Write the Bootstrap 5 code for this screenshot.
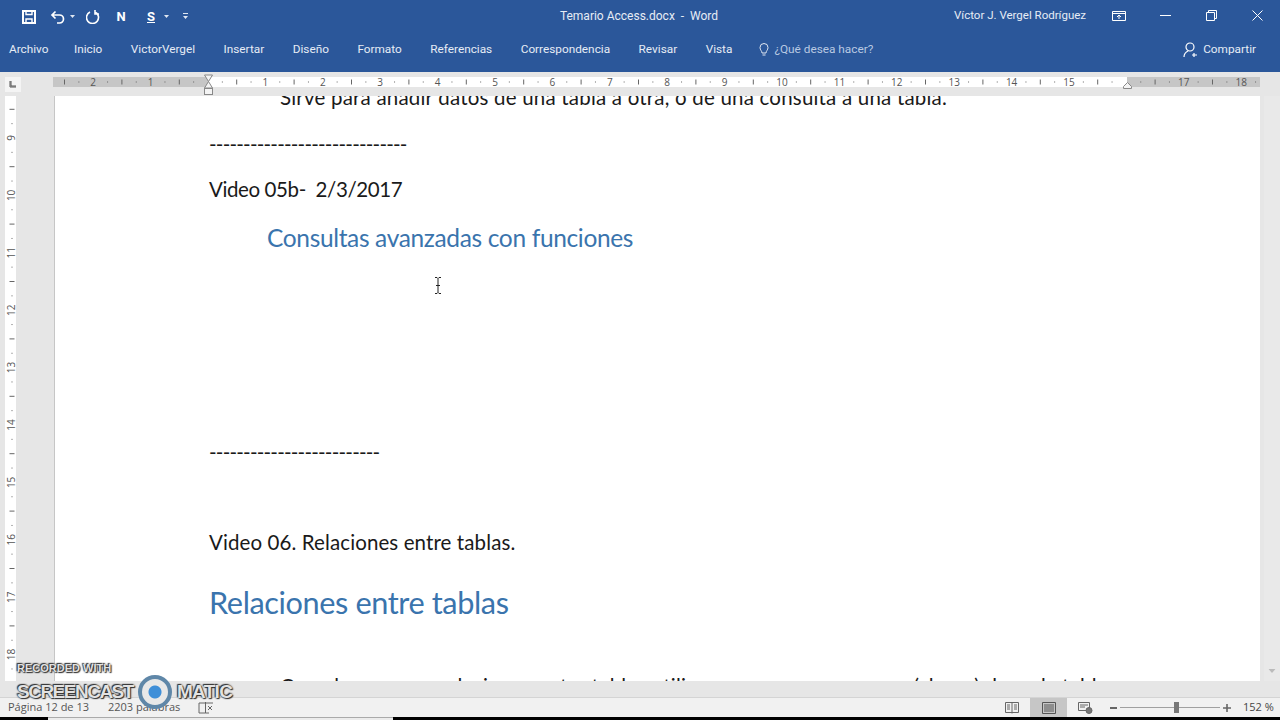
<!DOCTYPE html>
<html lang="es">
<head>
<meta charset="UTF-8">
<title>Temario Access.docx - Word</title>
<link href="https://cdn.jsdelivr.net/npm/bootstrap@5.3.0/dist/css/bootstrap.min.css" rel="stylesheet">
<style>
html, body { height: 720px; overflow: hidden; }
body { font-family: Roboto, "Liberation Sans", sans-serif; background: #000; }
.app { height: 717px; position: relative; }
.word-blue { background: #2b579a; color: #fff; }
.titlebar { height: 33px; font-size: 12px; padding-left: 21px; padding-bottom: 2px; }
.titlebar svg { display: block; }
.qat { width: 430px; gap: 11px; margin-top: 2px; }
.qat b { font-size: 13px; width: 14px; text-align: center; }
.qat-save { margin-right: 2px; }
.qat-n { margin-left: 3px; }
.qat-s { margin-left: 5px; gap: 6px; }
.qat-more { margin-left: 8px; }
.doc-title { width: 376px; text-align: center; white-space: pre; color: #e6ecf5; }
.user { margin-left: auto; width: 132px; margin-right: 10px; color: #e6ecf5; font-size: 11.5px; }
.winbtn { width: 46px; display: flex; justify-content: center; }
.tabs { height: 39px; font-size: 11.8px; padding-left: 9px; padding-bottom: 5px; color: #e6ecf5; }
.tabs span.tab { margin-right: 28.500px; }
.tabs span.tab-first { margin-right: 25.500px; }
.tabs span.tab-last { margin-right: 26px; }
.tell { color: #b9c9e2; }
.share { margin-left: auto; margin-right: 24px; }
.hruler { height: 24px; background: #e6e6e6; }
.hruler svg, .vruler svg { display: block; }
.ruler-text { font-family: "Open Sans", sans-serif; font-size: 10px; fill: #555; }
.main { height: 585px; background: #e6e6e6; }
.vruler { width: 54px; flex: none; }
.page { width: 1206px; flex: none; background: #fff; border-left: 1px solid #c6c6c6; overflow: hidden; padding-left: 154px; font-family: Lato, "Open Sans", sans-serif; color: #1a1a1a; }
.page p { margin: 0; line-height: 30px; height: 30px; white-space: pre; font-size: 20.500px; }
.vscroll { flex: 1; background: #e9e9e9; position: relative; margin-left: 4px; }
.hscroll { height: 16px; background: #e6e6e6; }
.statusbar { height: 20px; background: #f1f1f1; border-top: 1px solid #d4d4d4; font-family: "Open Sans", sans-serif; font-size: 11px; color: #555; padding-left: 8px; }
.statusbar .words { margin-left: 19px; }
.statusbar svg { display: block; }
.book { margin-left: 18px; }
.l1 { margin-top: -14px !important; padding-left: 71px; letter-spacing: .2px; }
.l2 { margin-top: 17px !important; letter-spacing: -.8px; }
.l3 { margin-top: 15px !important; letter-spacing: -.4px; }
.l4 { margin-top: 19px !important; padding-left: 58px; color: #3a74ad; font-size: 24.500px !important; letter-spacing: -.35px; }
.l5 { margin-top: 184px !important; letter-spacing: -.8px; }
.l6 { margin-top: 60px !important; letter-spacing: .1px; }
.l7 { margin-top: 31px !important; color: #3a74ad; font-size: 30.700px !important; letter-spacing: -.4px; }
.l8 { margin-top: 53px !important; padding-left: 71px; letter-spacing: .25px; }
.view { width: 37px; height: 19px; display: flex; align-items: center; justify-content: center; }
.view.active { background: #c6c6c6; }
.zoom-minus { margin-left: 6px; }
.zoom-track { width: 100px; height: 1px; background: #a0a0a0; position: relative; margin: 0 3px; }
.zoom-thumb { position: absolute; left: 54px; top: -5px; width: 5px; height: 11px; background: #777; }
.zoom-pct { width: 37px; margin-left: 12px; color: #444; font-size: 11px; }
.cursor { position: absolute; left: 433px; top: 277px; }
.wm { position: absolute; left: 17px; top: 660px; color: #e2e2e2; font-family: "Liberation Sans", sans-serif; font-weight: 700; text-shadow: 0 0 2px #222, 1px 1px 1px #333, -1px -1px 1px #333; }
.wm-top { font-size: 11px; line-height: 16px; }
.wm-bot { font-size: 19px; line-height: 28px; gap: 5px; margin-top: -1px; }
.wm-screencast { letter-spacing: -1.500px; }
.wm-matic { letter-spacing: -0.700px; }
.wm-dot { width: 34px; height: 34px; border-radius: 50%; border: 4px solid #5f87a8; background: radial-gradient(circle, #3f8fd8 0 6px, #e8e8e8 7px); }
.edge { height: 3px; }
.edge-light { width: 345px; margin-left: 48px; background: #ececec; border-top: 1px solid #aaa; }
</style>
</head>
<body>
<div class="app d-flex flex-column">
  <div class="titlebar word-blue d-flex align-items-center">
    <div class="qat d-flex align-items-center">
      <svg class="qat-save" width="16" height="16" viewBox="0 0 16 16" fill="none" stroke="#fff" stroke-width="2"><path d="M2 2h12v12H2z"/><path d="M5 2v3.500h6V2" stroke-width="1.400"/><path d="M5 14V10h6v4" stroke-width="1.400"/></svg>
      <div class="d-flex align-items-center gap-1">
        <svg width="16" height="14" viewBox="0 0 16 14" fill="none" stroke="#fff" stroke-width="1.7"><path d="M5.500 1.500 2 5l3.500 3.500M2.500 5h7a4 4 0 0 1 0 8H7"/></svg>
        <svg width="5" height="3" viewBox="0 0 5 3"><path d="M0 0h5L2.500 3z" fill="#dfe6f1"/></svg>
      </div>
      <svg width="14" height="15" viewBox="0 0 14 15" fill="none" stroke="#fff" stroke-width="1.6"><path d="M4 3a6 6 0 1 0 5 0M9 1v4h4"/></svg>
      <b class="qat-n">N</b>
      <div class="qat-s d-flex align-items-center">
        <b class="text-decoration-underline">S</b>
        <svg width="5" height="3" viewBox="0 0 5 3"><path d="M0 0h5L2.500 3z" fill="#dfe6f1"/></svg>
        <svg class="qat-more" width="5" height="7" viewBox="0 0 5 7"><path d="M0 0h5v1H0zM0 3h5L2.500 6z" fill="#dfe6f1"/></svg>
      </div>
    </div>
    <div class="doc-title">Temario Access.docx  -  Word</div>
    <div class="user text-nowrap">Víctor J. Vergel Rodríguez</div>
    <div class="winbtn"><svg width="14" height="10" viewBox="0 0 14 10" fill="none" stroke="#fff"><path d="M.5.500h13v9H.5zM.5 2.500h13M7 8V4M5 6l2-2 2 2"/></svg></div>
    <div class="winbtn"><svg width="11" height="2" viewBox="0 0 11 2"><path d="M0 .5h11" stroke="#fff"/></svg></div>
    <div class="winbtn"><svg width="11" height="11" viewBox="0 0 11 11" fill="none" stroke="#fff"><path d="M.5 2.500h8v8h-8zM2.500 2.500v-2h8v8h-2"/></svg></div>
    <div class="winbtn"><svg width="11" height="11" viewBox="0 0 11 11" fill="none" stroke="#fff"><path d="M.5.5l10 10M10.500.5l-10 10"/></svg></div>
  </div>
  <div class="tabs word-blue d-flex align-items-center text-nowrap">
    <span class="tab tab-first">Archivo</span><span class="tab">Inicio</span><span class="tab">VictorVergel</span><span class="tab">Insertar</span><span class="tab">Diseño</span><span class="tab">Formato</span><span class="tab">Referencias</span><span class="tab">Correspondencia</span><span class="tab">Revisar</span><span class="tab tab-last">Vista</span>
    <svg class="me-1" width="12" height="14" viewBox="0 0 12 14" fill="none" stroke="#dfe6f1"><path d="M4 10c0-2-2-3-2-5.500a4 4 0 0 1 8 0C10 7 8 8 8 10zM4.500 12h3"/></svg>
    <span class="tell">¿Qué desea hacer?</span>
    <div class="share d-flex align-items-center gap-1">
      <svg width="16" height="16" viewBox="0 0 16 16" fill="none" stroke="#fff" stroke-width="1.2"><circle cx="7" cy="5" r="4"/><path d="M1 15c0-3 2-5 4-6M11 11v4M9 13h5"/></svg>
      <span>Compartir</span>
    </div>
  </div>
  <div class="hruler" id="hruler"></div>
  <div class="main d-flex">
    <div class="vruler" id="vruler"></div>
    <div class="page">
      <p class="l1">Sirve para añadir datos de una tabla a otra, o de una consulta a una tabla.</p>
      <p class="l2">-----------------------------</p>
      <p class="l3">Video 05b-  2/3/2017</p>
      <p class="l4">Consultas avanzadas con funciones</p>
      <p class="l5">-------------------------</p>
      <p class="l6">Video 06. Relaciones entre tablas.</p>
      <p class="l7">Relaciones entre tablas</p>
      <p class="l8">Cuando creamos relaciones entre tablas utilizamos campos comunes (claves) de cada tabla</p>
    </div>
    <div class="vscroll">
      <svg class="position-absolute bottom-0 start-50 translate-middle-x mb-2" width="7" height="4" viewBox="0 0 7 4"><path d="M0 0h7L3.500 4z" fill="#bbb"/></svg>
    </div>
  </div>
  <div class="hscroll"></div>
  <div class="statusbar d-flex align-items-center text-nowrap">
    <span>Página 12 de 13</span>
    <span class="words">2203 palabras</span>
    <svg class="book" width="16" height="14" viewBox="0 0 16 14" fill="none" stroke="#666"><path d="M7.500 2H1v10h6.500V1M7.500 2H15M7.500 12H11M10 5l4 4M14 5l-4 4"/></svg>
    <div class="ms-auto d-flex align-items-center">
      <div class="view"><svg width="14" height="12" viewBox="0 0 14 12" fill="none" stroke="#666"><path d="M.5.5h13v10H.5zM7 .5v11M2 3h3M2 5h3M2 7h3M9 3h3M9 5h3M9 7h3"/></svg></div>
      <div class="view active"><svg width="14" height="12" viewBox="0 0 14 12" fill="none" stroke="#555"><path d="M.5.5h13v11H.5zM2 3h10M2 5h10M2 7h10M2 9h10"/></svg></div>
      <div class="view"><svg width="15" height="12" viewBox="0 0 15 12" fill="none" stroke="#666"><path d="M.5.5h11v8H.5zM2 3h8M2 5h5"/><circle cx="11" cy="8.500" r="3" fill="#777"/></svg></div>
      <svg class="zoom-minus" width="7" height="2" viewBox="0 0 7 2"><path d="M0 1h7" stroke="#666" stroke-width="2"/></svg>
      <div class="zoom-track"><div class="zoom-thumb"></div></div>
      <svg width="8" height="8" viewBox="0 0 8 8"><path d="M0 4h8M4 0v8" stroke="#666" stroke-width="1.600"/></svg>
      <span class="zoom-pct">152 %</span>
    </div>
  </div>
  <svg class="cursor" width="10" height="17" viewBox="0 0 10 17" fill="none" stroke="#222"><path d="M2 .5h2l1 1 1-1h2M5 1.500v14M2 16.500h2l1-1 1 1h2M3 8.500h4"/></svg>
  <div class="wm">
    <div class="wm-top">RECORDED WITH</div>
    <div class="wm-bot d-flex align-items-center"><span class="wm-screencast">SCREENCAST</span><span class="wm-dot"></span><span class="wm-matic">MATIC</span></div>
  </div>
</div>
<div class="edge d-flex"><div class="edge-light"></div></div>
<script src="https://cdn.jsdelivr.net/npm/bootstrap@5.3.0/dist/js/bootstrap.bundle.min.js"></script>
<script>
  // ruler scale: one centimetre is about 57.4px on screen
  const cm = 57.4;
  const NS = "http://www.w3.org/2000/svg";
  const el = (parent, name, attrs, text) => {
    const n = document.createElementNS(NS, name);
    for (const k in attrs) n.setAttribute(k, attrs[k]);
    if (text) n.textContent = text;
    parent.appendChild(n);
    return n;
  };

  // horizontal ruler
  const h = el(document.getElementById("hruler"), "svg", { width: 1280, height: 24 });
  el(h, "rect", { x: 5, y: 5, width: 16, height: 15, fill: "#f4f4f4" });
  el(h, "path", { d: "M10 9v6h6M11 9v5h5", fill: "none", stroke: "#555" });
  el(h, "rect", { x: 53, y: 5, width: 155, height: 10, fill: "#c6c6c6" });
  el(h, "rect", { x: 208, y: 5, width: 919, height: 10, fill: "#fff" });
  el(h, "rect", { x: 1127, y: 5, width: 133, height: 10, fill: "#c6c6c6" });
  for (let i = -3; i <= 18; i++) {
    const x = 208 + i * cm;
    if (i !== 0 && i !== 16 && i > -3) {
      el(h, "text", { x, y: 14, "text-anchor": "middle", class: "ruler-text" }, String(Math.abs(i)));
    }
    for (const [f, len] of [[0.25, 1], [0.5, 5], [0.75, 1]]) {
      const tx = x + f * cm;
      if (tx > 60 && tx < 1258 && Math.abs(tx - 1127) > 5 && Math.abs(tx - 208) > 5) {
        el(h, "path", { d: `M${tx} ${10 - len / 2}v${len}`, stroke: "#666" });
      }
    }
  }
  el(h, "path", { d: "M204.500 3h8l-4 6.500 4 6.500h-8l4-6.500z", fill: "#f4f4f4", stroke: "#888" });
  el(h, "rect", { x: 204.500, y: 16.500, width: 8, height: 6, fill: "#f4f4f4", stroke: "#888" });
  el(h, "path", { d: "M1123.500 16.500v-2l4-4 4 4v2z", fill: "#f4f4f4", stroke: "#888" });

  // vertical ruler
  const v = el(document.getElementById("vruler"), "svg", { width: 54, height: 585 });
  el(v, "rect", { x: 5, y: 0, width: 11, height: 585, fill: "#fff" });
  for (let i = 8; i <= 18; i++) {
    const y = 138 - 96 + (i - 9) * cm;
    if (i > 8) {
      el(v, "text", { x: 12, y, "text-anchor": "middle", "dominant-baseline": "middle", transform: `rotate(-90 12 ${y})`, class: "ruler-text" }, String(i));
    }
    for (const [f, len] of [[0.25, 1], [0.5, 5], [0.75, 1]]) {
      const ty = y + f * cm;
      if (ty > 4 && ty < 585) {
        el(v, "path", { d: `M${12 - len / 2} ${ty}h${len}`, stroke: "#666" });
      }
    }
  }
</script>
</body>
</html>
